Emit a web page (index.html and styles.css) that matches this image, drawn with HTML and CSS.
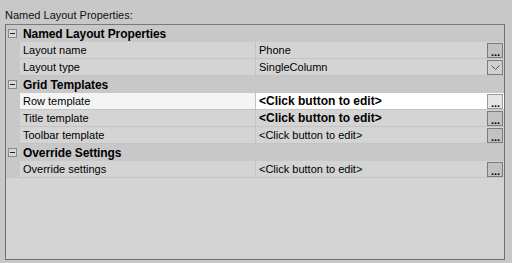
FILE: index.html
```html
<!DOCTYPE html>
<html lang="en">
<head>
    <meta charset="UTF-8">
    <title>Named Layout Properties</title>
    <link rel="stylesheet" href="styles.css">
</head>
<body>
    <div class="caption">Named Layout Properties:</div>
    <div class="grid">
        <div class="cat">
            <span class="toggle"></span>
            <span class="cat-label">Named Layout Properties</span>
        </div>
        <div class="prop">
            <div class="gutter"></div>
            <div class="name">Layout name</div>
            <div class="value">Phone<span class="btn dots">...</span></div>
        </div>
        <div class="prop">
            <div class="gutter"></div>
            <div class="name">Layout type</div>
            <div class="value">SingleColumn<span class="btn drop"><svg width="9" height="5" viewBox="0 0 9 5"><path d="M0.5 0.5 L4.5 4.5 L8.5 0.5" fill="none" stroke="#555" stroke-width="1"/></svg></span></div>
        </div>

        <div class="cat">
            <span class="toggle"></span>
            <span class="cat-label">Grid Templates</span>
        </div>
        <div class="prop selected">
            <div class="gutter"></div>
            <div class="name">Row template</div>
            <div class="value bold">&lt;Click button to edit&gt;<span class="btn dots">...</span></div>
        </div>
        <div class="prop">
            <div class="gutter"></div>
            <div class="name">Title template</div>
            <div class="value bold">&lt;Click button to edit&gt;<span class="btn dots">...</span></div>
        </div>
        <div class="prop">
            <div class="gutter"></div>
            <div class="name">Toolbar template</div>
            <div class="value">&lt;Click button to edit&gt;<span class="btn dots">...</span></div>
        </div>

        <div class="cat">
            <span class="toggle"></span>
            <span class="cat-label">Override Settings</span>
        </div>
        <div class="prop">
            <div class="gutter"></div>
            <div class="name">Override settings</div>
            <div class="value">&lt;Click button to edit&gt;<span class="btn dots">...</span></div>
        </div>
    </div>
</body>
</html>
```

FILE: styles.css
```css
body {
    margin: 0;
    padding: 0 7px 3px 5px;
    height: 263px;
    box-sizing: border-box;
    display: flex;
    flex-direction: column;
    background-color: #c8c8c8;
    font-family: "Liberation Sans", Arial, sans-serif;
    font-size: 11px;
    color: #000;
}

.caption {
    height: 24px;
    line-height: 31px;
    color: #111;
}

.grid {
    flex: 1;
    border: 1px solid #6e6e6e;
    border-top-color: #7a7a7a;
    background-color: #d4d4d4;
    display: flex;
    flex-direction: column;
}

/* category header rows */
.cat {
    height: 17px;
    display: flex;
    align-items: center;
    background-color: #c8c8c8;
}

.toggle {
    width: 9px;
    height: 9px;
    margin: 0 6px 0 2px;
    border: 1px solid #8a8a8a;
    box-sizing: border-box;
    background-color: #d8d8d8;
    position: relative;
}

.toggle::after {
    content: "";
    position: absolute;
    left: 1px;
    right: 1px;
    top: 3px;
    height: 1px;
    background-color: #222;
}

.cat-label {
    font-weight: bold;
    font-size: 12px;
    letter-spacing: -0.1px;
}

/* property rows */
.prop {
    height: 17px;
    display: flex;
}

.gutter {
    width: 14px;
    background-color: #c8c8c8;
}

.name {
    width: 236px;
    padding-left: 3px;
    box-sizing: border-box;
    border-bottom: 1px solid #c4c4c4;
    border-right: 1px solid #c4c4c4;
    line-height: 17px;
    white-space: nowrap;
}

.value {
    flex: 1;
    display: flex;
    align-items: center;
    padding-left: 3px;
    border-bottom: 1px solid #c4c4c4;
    white-space: nowrap;
}

.value.bold {
    font-weight: bold;
    font-size: 12px;
}

.prop.selected .name {
    background-color: #f4f4f4;
}

.prop.selected .value {
    background-color: #ffffff;
}

.btn {
    margin-left: auto;
    margin-right: 1px;
    width: 16px;
    height: 15px;
    box-sizing: border-box;
    border: 1px solid #7c7c7c;
    background-color: #c2c2c2;
    display: flex;
    align-items: center;
    justify-content: center;
    font-weight: bold;
    font-size: 11px;
}

.btn.dots {
    align-items: flex-end;
    line-height: 9px;
    padding-left: 1px;
}

.prop.selected .btn {
    background-color: #e6e6e6;
    border-color: #9a9a9a;
}

.btn.drop {
    background-color: #d0d0d0;
}
```
